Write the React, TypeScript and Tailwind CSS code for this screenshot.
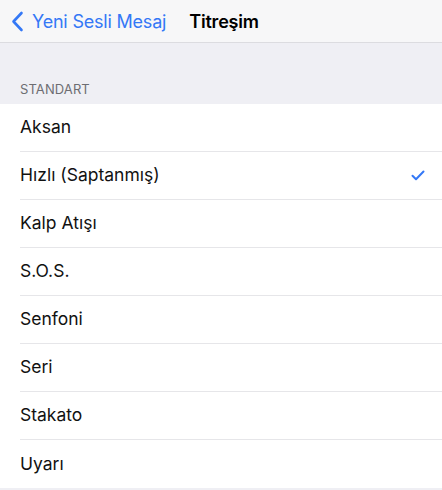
import React from "react";

const patterns = [
  { name: "Aksan", selected: false },
  { name: "Hızlı (Saptanmış)", selected: true },
  { name: "Kalp Atışı", selected: false },
  { name: "S.O.S.", selected: false },
  { name: "Senfoni", selected: false },
  { name: "Seri", selected: false },
  { name: "Stakato", selected: false },
  { name: "Uyarı", selected: false },
];

function BackChevron() {
  return (
    <svg width="13" height="21" viewBox="0 0 13 21" fill="none">
      <path d="M10.5 2 L2.5 10.5 L10.5 19" stroke="#3478f6" strokeWidth="2.6" strokeLinecap="round" strokeLinejoin="round" />
    </svg>
  );
}

function Check() {
  return (
    <svg width="14" height="11" viewBox="0 0 14 11" fill="none">
      <path d="M1.5 5.8 L5 9.2 L12.5 1.5" stroke="#3478f6" strokeWidth="2" strokeLinecap="round" strokeLinejoin="round" />
    </svg>
  );
}

export default function App() {
  return (
    <div className="h-[490px] w-[442px] overflow-hidden bg-[#efeff4] font-['Inter',sans-serif] antialiased">
      <header className="flex h-[43px] items-center border-b border-[#dcdce0] bg-[#f7f7f8]">
        <button className="flex items-center pl-[11px] text-[18px] text-[#3478f6]">
          <BackChevron />
          <span className="ml-[8px] tracking-[-0.2px]">Yeni Sesli Mesaj</span>
        </button>
        <h1 className="ml-[23px] text-[18px] font-semibold tracking-[-0.2px] text-black">Titreşim</h1>
      </header>

      <div className="px-[20px] pb-[6px] pt-[37px] text-[13px] leading-[18px] uppercase tracking-[0.1px] text-[#6d6d72]">
        Standart
      </div>

      <ul className="bg-white">
        {patterns.map((p, i) => (
          <li key={p.name} className="flex h-[48px] pl-[20px]">
            <div
              className={
                i < patterns.length - 1
                  ? "flex flex-1 items-center justify-between border-b border-[#e6e6e9] pr-[17px]"
                  : "flex flex-1 items-center justify-between pr-[17px]"
              }
            >
              <span className="text-[17.5px] text-[#111]">{p.name}</span>
              {p.selected && <Check />}
            </div>
          </li>
        ))}
      </ul>
    </div>
  );
}
